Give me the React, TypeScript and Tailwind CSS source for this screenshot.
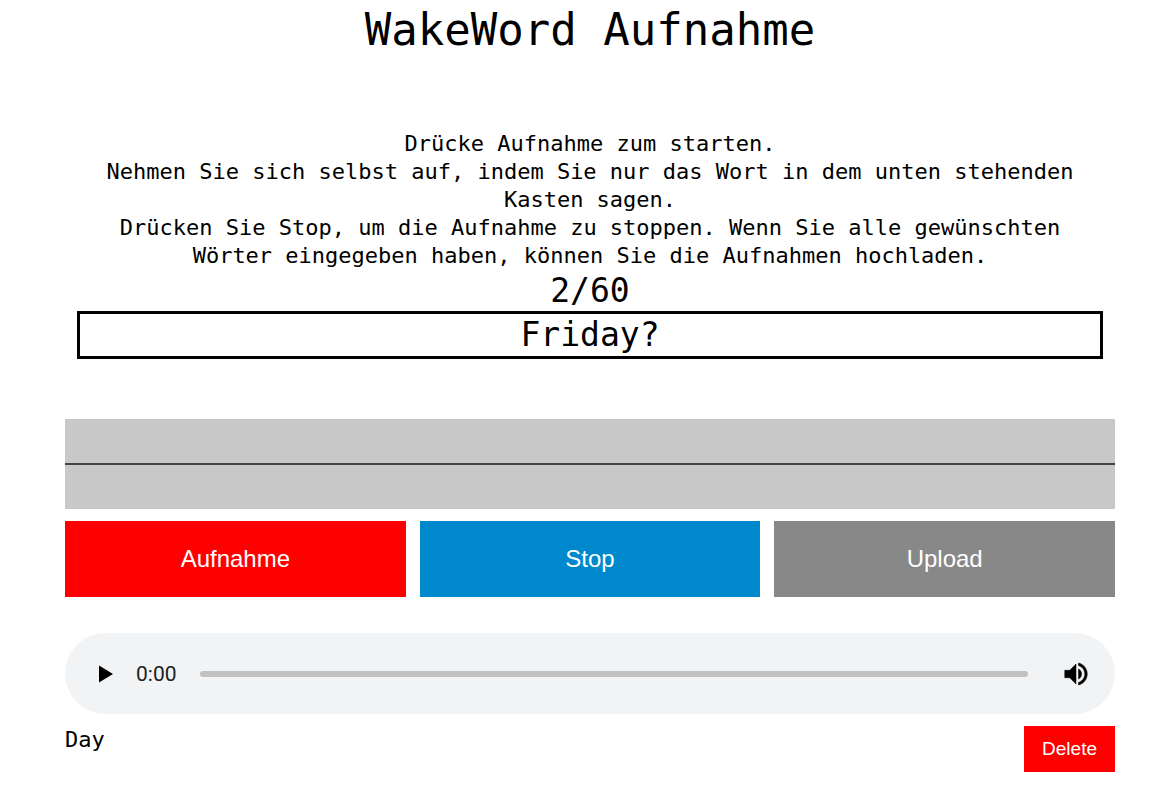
import { useState } from "react";

function PlayIcon() {
  return (
    <svg viewBox="0 0 14 18" className="h-[18px] w-[14px]" fill="#000" aria-hidden="true">
      <path d="M0 0.500v17L14 9z" />
    </svg>
  );
}

function VolumeIcon() {
  return (
    <svg viewBox="0 0 24 24" className="h-[30px] w-[30px]" fill="#000" stroke="#000" strokeWidth="0.400" aria-hidden="true">
      <path d="M3 9v6h4l5 5V4L7 9H3zm13.500 3c0-1.770-1.020-3.290-2.500-4.030v8.050c1.480-.730 2.500-2.250 2.500-4.020zM14 3.230v2.060c2.890.860 5 3.540 5 6.710s-2.110 5.850-5 6.710v2.060c4.010-.910 7-4.490 7-8.770s-2.990-7.860-7-8.770z" />
    </svg>
  );
}

function Player() {
  const [position, setPosition] = useState(0);
  return (
    <div className="flex h-[81px] items-center rounded-full bg-[#f1f3f4] pr-6 pl-[34px]">
      <button type="button" aria-label="Play" className="flex">
        <PlayIcon />
      </button>
      <span className="ml-[23px] font-['Roboto',sans-serif] text-[21px] leading-6 text-[#202124]">0:00</span>
      <input
        type="range"
        aria-label="Position"
        min={0}
        max={100}
        value={position}
        onChange={(event) => setPosition(Number(event.target.value))}
        className="mr-[33px] ml-[23px] h-1.5 min-w-0 flex-1 appearance-none rounded-full bg-[#c1c1c1] [&::-webkit-slider-thumb]:h-0 [&::-webkit-slider-thumb]:w-0 [&::-webkit-slider-thumb]:appearance-none"
      />
      <button type="button" aria-label="Volume" className="flex">
        <VolumeIcon />
      </button>
    </div>
  );
}

export default function App() {
  return (
    <main className="min-h-screen bg-white pr-[53px] pl-[65px] font-['DejaVu_Sans_Mono',monospace] text-[22px] leading-7 text-black">
      <h1 className="pt-0.5 text-center text-[44px] leading-[56px]">WakeWord Aufnahme</h1>

      <section className="mx-3 mt-[72px] text-center">
        <p>Drücke Aufnahme zum starten.</p>
        <p>Nehmen Sie sich selbst auf, indem Sie nur das Wort in dem unten stehenden Kasten sagen.</p>
        <p>
          Drücken Sie Stop, um die Aufnahme zu stoppen. Wenn Sie alle gewünschten Wörter eingegeben
          haben, können Sie die Aufnahmen hochladen.
        </p>
        <p className="text-[33px] leading-[41px]">2/60</p>
        <p className="border-3 border-black text-[33px] leading-[42px]">Friday?</p>
      </section>

      <div className="mt-[60px] flex h-[90px] flex-col justify-center bg-[#c8c8c8]">
        <div className="h-0.5 bg-[#444]" />
      </div>

      <div className="mt-3 grid grid-cols-3 gap-[14px] font-['Liberation_Sans',sans-serif] text-2xl text-white">
        <button type="button" className="h-19 bg-[#f00]">Aufnahme</button>
        <button type="button" className="h-19 bg-[#0088cc]">Stop</button>
        <button type="button" className="h-19 bg-[#888]">Upload</button>
      </div>

      <article className="mt-9">
        <Player />
        <div className="mt-3 flex items-start justify-between">
          <p>Day</p>
          <button
            type="button"
            className="h-[46px] bg-[#f00] px-[18px] font-['Liberation_Sans',sans-serif] text-[19px] text-white"
          >
            Delete
          </button>
        </div>
      </article>
    </main>
  );
}
